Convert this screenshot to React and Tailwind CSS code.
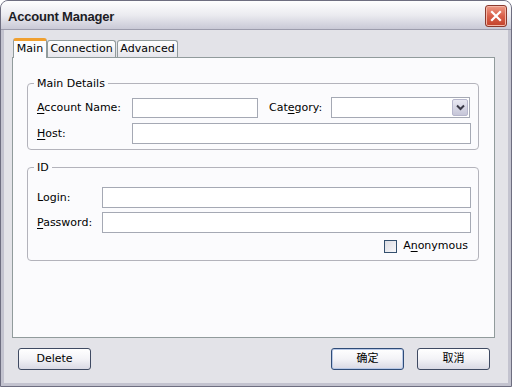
import React from "react";

function U({ children }) {
  return <span className="underline underline-offset-[2px]">{children}</span>;
}

function TextBox({ className = "" }) {
  return <div className={"bg-white border border-[#a5a9b4] " + className} />;
}

function Btn({ children, cjk, def }) {
  return (
    <div
      className={
        "w-[73px] h-[22px] rounded-[3px] border flex items-center justify-center text-[11px] text-black bg-gradient-to-b from-[#ffffff] via-[#f3f3f7] to-[#d9d9e4] " +
        (def ? "border-[#2f4c78] shadow-[inset_0_0_0_1px_#b8c8e6]" : "border-[#3f4a62]")
      }
      style={cjk ? { fontFamily: '"DejaVu Sans", "Noto Sans CJK SC", sans-serif' } : undefined}
    >
      {children}
    </div>
  );
}

export default function App() {
  return (
    <div
      className="w-[512px] h-[387px] flex flex-col bg-[#c3c3cf] border border-[#6e6e80] rounded-t-[8px] overflow-hidden text-black"
      style={{ fontFamily: '"DejaVu Sans", "Noto Sans CJK SC", sans-serif' }}
    >
      {/* Title bar */}
      <div className="h-[29px] shrink-0 flex items-center justify-between pl-[7px] pr-[4px] pt-[3px] bg-gradient-to-b from-[#fefefe] via-[#ebebf0] to-[#c9c9d6] border-b border-[#9c9cac]">
        <span
          className="text-[13px] font-bold text-[#1c1c24] tracking-[-0.2px]"
          style={{ fontFamily: '"Liberation Sans", Arial, sans-serif' }}
        >
          Account Manager
        </span>
        <div className="w-[22px] h-[22px] mt-[-1px] rounded-[3px] border border-[#8a3a2e] shadow-[inset_0_0_0_1px_#f4b6a6] bg-gradient-to-b from-[#ec9a86] via-[#d9604a] to-[#c2412a] flex items-center justify-center">
          <svg width="12" height="12" viewBox="0 0 12 12">
            <path d="M2 2 L10 10 M10 2 L2 10" stroke="#ffffff" strokeWidth="2.2" strokeLinecap="square" />
          </svg>
        </div>
      </div>

      {/* Body */}
      <div className="flex-1 mx-[3px] mb-[3px] bg-[#e3e3e8] flex flex-col pt-[8px]">
        {/* Tabs */}
        <div className="flex items-end h-[19px] ml-[9px] text-[11px] relative z-10">
          <div className="w-[34px] h-[20px] mb-[-1px] rounded-t-[3px] border-x border-[#919b9c] border-t-[3px] border-t-[#f0a030] bg-[#fbfbfd] flex items-center justify-center pb-[1px]">
            Main
          </div>
          <div className="w-[69px] h-[17px] rounded-t-[3px] border border-b-0 border-[#919b9c] bg-gradient-to-b from-[#ffffff] to-[#e6e6ec] flex items-center justify-center">
            Connection
          </div>
          <div className="w-[61px] h-[17px] ml-[1px] rounded-t-[3px] border border-b-0 border-[#919b9c] bg-gradient-to-b from-[#ffffff] to-[#e6e6ec] flex items-center justify-center">
            Advanced
          </div>
        </div>

        {/* Panel */}
        <div className="h-[281px] ml-[8px] mr-[13px] bg-[#fbfbfd] border border-[#919b9c] flex flex-col text-[11px]">
          {/* Main Details */}
          <fieldset className="mt-[18px] ml-[14px] mr-[15px] border border-[#b3b3bb] rounded-[4px] pl-[9px] pr-[7px] pb-[5px]">
            <legend className="ml-[-3px] px-[3px] leading-[15px]">Main Details</legend>
            <div className="mt-[6px] flex items-center h-[21px]">
              <span className="w-[95px] pt-[1px]">
                <U>A</U>ccount Name:
              </span>
              <TextBox className="w-[126px] h-[20px]" />
              <span className="ml-[11px] w-[62px] pt-[1px]">
                Cat<U>e</U>gory:
              </span>
              <div className="w-[139px] h-[21px] bg-white border border-[#a5a9b4] flex justify-end items-stretch p-[1px]">
                <div className="w-[16px] rounded-[2px] border border-[#b6b6cc] bg-gradient-to-b from-[#e8e8f2] to-[#c6c6d8] flex items-center justify-center">
                  <svg width="9" height="7" viewBox="0 0 9 7">
                    <path d="M1 1.5 L4.5 5 L8 1.5" fill="none" stroke="#3a3a48" strokeWidth="2" />
                  </svg>
                </div>
              </div>
            </div>
            <div className="mt-[5px] flex items-center h-[21px]">
              <span className="w-[95px] pt-[1px]">
                <U>H</U>ost:
              </span>
              <TextBox className="flex-1 h-[21px]" />
            </div>
          </fieldset>

          {/* ID */}
          <fieldset className="mt-[10px] ml-[14px] mr-[15px] border border-[#b3b3bb] rounded-[4px] pl-[9px] pr-[7px] pb-[7px]">
            <legend className="ml-[-3px] px-[3px] leading-[15px]">ID</legend>
            <div className="mt-[12px] flex items-center h-[21px]">
              <span className="w-[65px] pt-[1px]">Login:</span>
              <TextBox className="flex-1 h-[21px]" />
            </div>
            <div className="mt-[4px] flex items-center h-[21px]">
              <span className="w-[65px] pt-[1px]">
                <U>P</U>assword:
              </span>
              <TextBox className="flex-1 h-[21px]" />
            </div>
            <div className="mt-[6px] flex items-center justify-end h-[14px] pr-[3px]">
              <div className="w-[13px] h-[13px] border border-[#34506e] bg-gradient-to-br from-[#dcdce2] to-[#f8f8fa]" />
              <span className="ml-[6px]">
                A<U>n</U>onymous
              </span>
            </div>
          </fieldset>
        </div>

        {/* Buttons */}
        <div className="mt-[10px] flex items-center pl-[14px] pr-[18px]">
          <Btn>Delete</Btn>
          <div className="flex-1" />
          <Btn cjk def>
            确定
          </Btn>
          <div className="w-[13px]" />
          <Btn cjk>取消</Btn>
        </div>
      </div>
    </div>
  );
}
